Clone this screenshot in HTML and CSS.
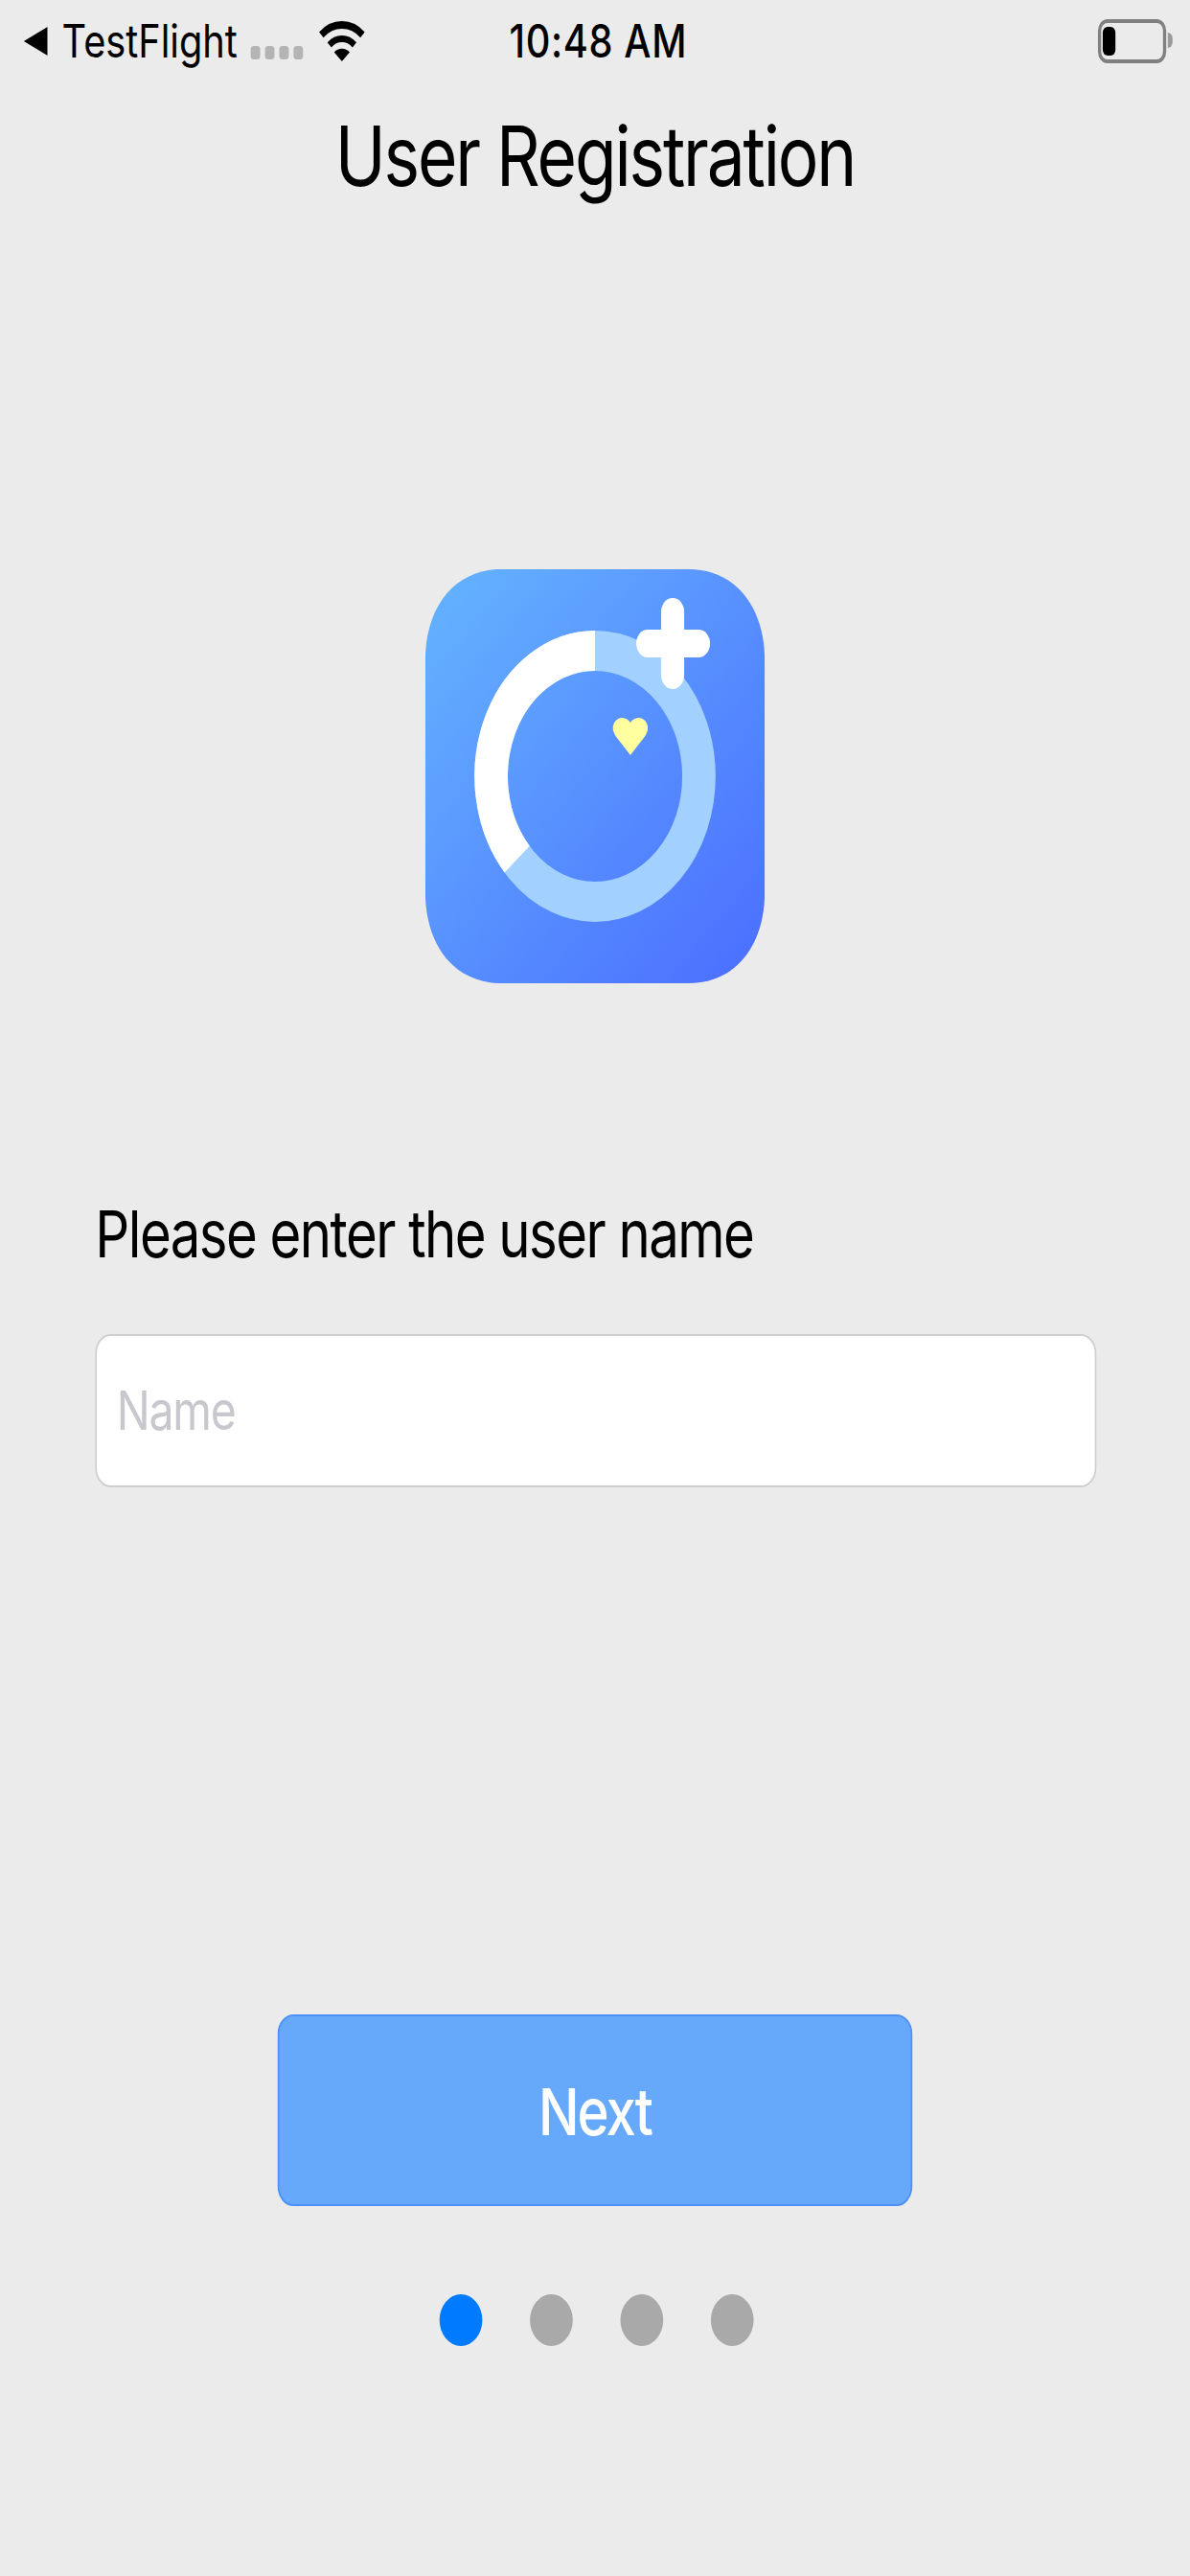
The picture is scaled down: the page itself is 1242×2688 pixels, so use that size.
FILE: index.html
```html
<!DOCTYPE html>
<html lang="en">
<head>
  <meta charset="UTF-8" />
  <meta name="viewport" content="width=device-width, initial-scale=1.0" />
  <title>User Registration</title>
  <link rel="stylesheet" href="styles.css">
</head>
<body>
  <div class="screen">
    <div class="status-bar">
      <div class="status-left">
        <svg class="back-arrow" viewBox="0 0 15 15"><path d="M15 0V15L0 7.5Z"/></svg>
        <span class="back-label">TestFlight</span>
        <div class="signal">
          <span></span><span></span><span></span><span></span>
        </div>
        <svg class="wifi" viewBox="0 0 29 22">
          <path d="M1.5 8.2A19 19 0 0 1 27.5 8.2" fill="none" stroke="#000" stroke-width="4"/>
          <path d="M6.6 13.4A11.5 11.5 0 0 1 22.4 13.4" fill="none" stroke="#000" stroke-width="3.6"/>
          <path d="M14.5 22L9.6 17.2A7.4 7.4 0 0 1 19.4 17.2Z"/>
        </svg>
      </div>
      <span class="clock">10:48 AM</span>
      <div class="status-right">
        <div class="battery"><div class="battery-level"></div></div>
        <div class="battery-nub"></div>
      </div>
    </div>

    <h1 class="page-title">User Registration</h1>

    <!-- app icon: ring progress with a plus and a small heart -->
    <svg class="app-icon" viewBox="0 0 214 216">
      <defs>
        <linearGradient id="iconFill" x1="0" y1="0" x2="1" y2="1">
          <stop offset="0" stop-color="#65b4ff"/>
          <stop offset="1" stop-color="#4a6dff"/>
        </linearGradient>
      </defs>
      <path d="M48 0H166C195 0 214 19 214 48V168C214 197 195 216 166 216H48C19 216 0 197 0 168V48C0 19 19 0 48 0Z" fill="url(#iconFill)"/>
      <circle cx="107" cy="108" r="65.5" fill="none" stroke="#a2d0ff" stroke-width="21"/>
      <path d="M107 42.5A65.5 65.5 0 0 0 57.9 151.3" fill="none" stroke="#fff" stroke-width="21"/>
      <rect x="148.7" y="15" width="14.5" height="47.5" rx="7.2" fill="#fff"/>
      <rect x="133" y="31.5" width="46.5" height="14.5" rx="7.2" fill="#fff"/>
      <path d="M129.3 97L120.2 87.2C115.8 82 120 77.5 124 77.5C126.4 77.5 128.2 78.6 129.3 80C130.4 78.6 132.2 77.5 134.6 77.5C138.6 77.5 142.8 82 138.4 87.2Z" fill="#ffff9f"/>
    </svg>

    <label class="field-label">Please enter the user name</label>
    <div class="name-input"><span class="placeholder">Name</span></div>

    <button class="next-btn">Next</button>

    <div class="pager">
      <span class="pager-dot active"></span>
      <span class="pager-dot"></span>
      <span class="pager-dot"></span>
      <span class="pager-dot"></span>
    </div>
  </div>
</body>
</html>
```

FILE: styles.css
```css
html, body {
  width: 1242px;
  height: 2688px;
}

body {
  margin: 0;
  padding: 0;
  background: #ebebeb;
  overflow: hidden;
}

/* laid out on a 750 wide canvas, then stretched up to the window */
.screen {
  width: 750px;
  height: 1344px;
  display: flex;
  flex-direction: column;
  align-items: center;
  font-family: Inter, "Liberation Sans", sans-serif;
  color: #000;
  transform: scale(1.656, 2);
  transform-origin: top left;
}

/* Status bar */
.status-bar {
  width: 100%;
  height: 42px;
  display: grid;
  grid-template-columns: 1fr auto 1fr;
  align-items: center;
  box-sizing: border-box;
  padding: 0 11px 0 15px;
  font-size: 24px;
}

.status-left {
  display: flex;
  align-items: center;
}

.back-arrow {
  width: 15px;
  height: 15px;
  margin-right: 9px;
}

.signal {
  display: flex;
  gap: 3px;
  margin: 13px 10px 0 8px;
}

.signal span {
  width: 6px;
  height: 7px;
  border-radius: 2px;
  background: #b4b4b4;
}

.wifi {
  width: 29px;
  height: 22px;
}

.clock {
  font-weight: 500;
  letter-spacing: 0.4px;
}

.status-right {
  display: flex;
  align-items: center;
  justify-content: flex-end;
}

.battery {
  width: 43px;
  height: 23px;
  box-sizing: border-box;
  border: 2px solid #808080;
  border-radius: 6px;
  padding: 2px 1px;
}

.battery-level {
  width: 8px;
  height: 15px;
  border-radius: 3px;
  background: #000;
}

.battery-nub {
  width: 3px;
  height: 8px;
  margin-left: 1px;
  border-radius: 0 3px 3px 0;
  background: #9a9a9a;
}

.page-title {
  margin: 13px 0 190px;
  font-size: 43px;
  line-height: 52px;
  font-weight: 400;
  letter-spacing: -1.3px;
}

.app-icon {
  width: 214px;
  height: 216px;
  flex-shrink: 0;
}

.field-label {
  align-self: flex-start;
  margin: 111px 0 32px 60px;
  font-size: 34px;
  line-height: 40px;
  letter-spacing: -0.93px;
}

.name-input {
  width: 631px;
  height: 80px;
  box-sizing: border-box;
  display: flex;
  align-items: center;
  padding-left: 13px;
  background: #fff;
  border: 1px solid #cfcfcf;
  border-radius: 10px;
}

.placeholder {
  font-size: 28px;
  color: #c7c7cd;
  letter-spacing: -0.7px;
}

.next-btn {
  width: 400px;
  height: 100px;
  margin-top: 275px;
  padding: 0;
  background: #66a8fa;
  border: 1.5px solid #4c90f8;
  border-radius: 10px;
  color: #fff;
  font-family: inherit;
  font-size: 34px;
  font-weight: 500;
  letter-spacing: -1.2px;
}

.pager {
  display: flex;
  gap: 30px;
  margin-top: 46px;
  margin-left: 1px;
}

.pager-dot {
  width: 27px;
  height: 27px;
  border-radius: 50%;
  background: #a9a9a9;
}

.pager-dot.active {
  background: #007aff;
}
```
